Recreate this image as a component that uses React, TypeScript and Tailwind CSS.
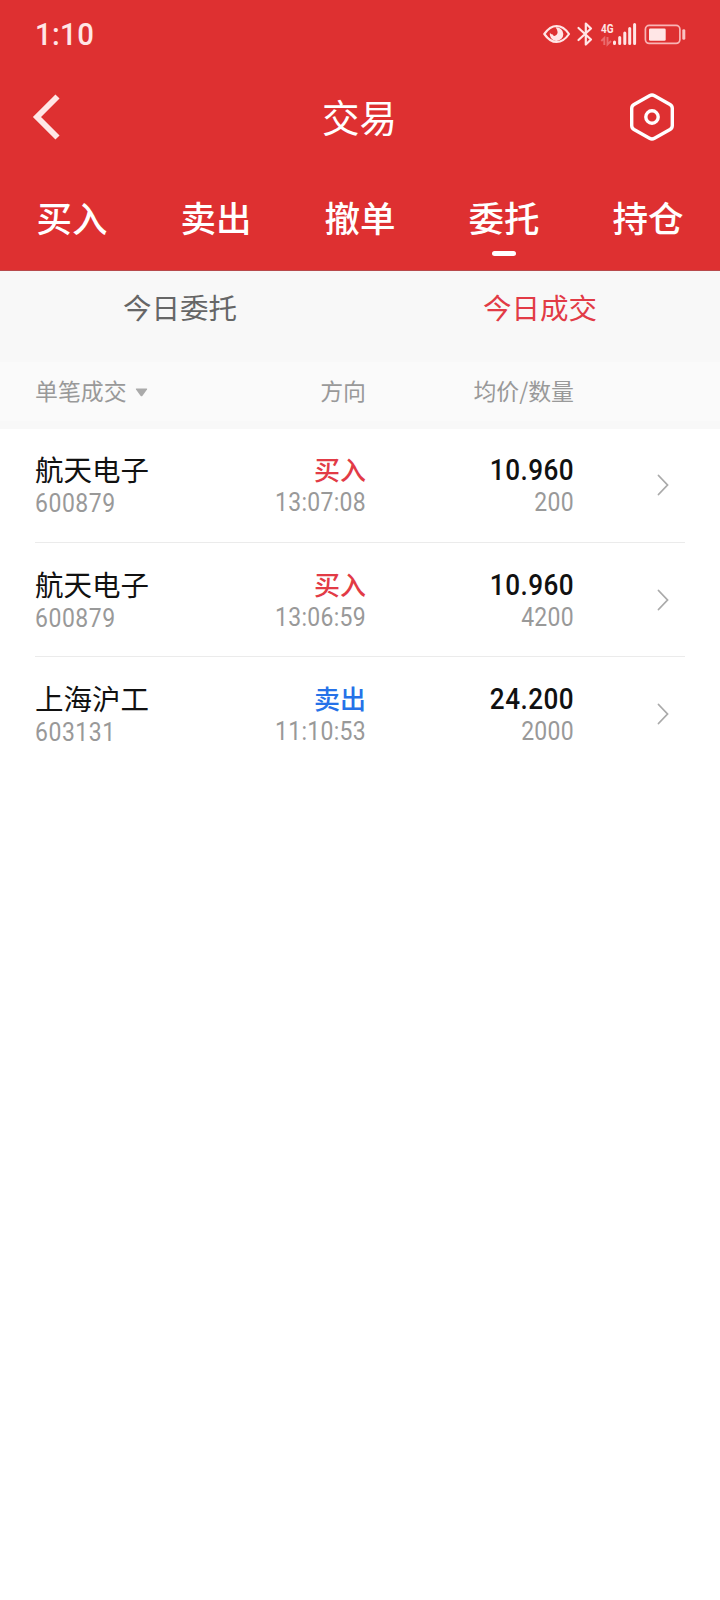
const cjk = "font-['Noto_Sans_CJK_SC',sans-serif]";

type Trade = {
  name: string;
  code: string;
  side: "买入" | "卖出";
  time: string;
  price: string;
  qty: string;
};

const trades: Trade[] = [
  { name: "航天电子", code: "600879", side: "买入", time: "13:07:08", price: "10.960", qty: "200" },
  { name: "航天电子", code: "600879", side: "买入", time: "13:06:59", price: "10.960", qty: "4200" },
  { name: "上海沪工", code: "603131", side: "卖出", time: "11:10:53", price: "24.200", qty: "2000" },
];

const tabs = ["买入", "卖出", "撤单", "委托", "持仓"];

function StatusIcons() {
  return (
    <svg width="144" height="26" viewBox="542 21 144 26" fill="none" className="text-[#ffe6e6]">
      <path d="M544.3 34C549 27.300 552.500 26 556.500 26S564.500 27.300 569 34C564.500 40.700 560.500 42 556.500 42S549 40.700 544.300 34Z" stroke="currentColor" strokeWidth="2.200" strokeLinejoin="round" />
      <path d="M555.500 27.400a6.800 6.800 0 1 1-5.600 5.200q0.600 2 2.900 1.900q0.300 1.800 2.200 1.300a3.700 3.700 0 0 0 2.300-5q-0.300-2.200-1.800-3.400Z" fill="currentColor" />
      <path d="M578.500 28L591 39.500L585.800 44.500V23.500L591 28.500L578.500 40" stroke="currentColor" strokeWidth="2.200" strokeLinejoin="round" strokeLinecap="round" />
      <text x="601" y="32.700" fontSize="13" fontWeight="700" fill="currentColor" textLength="12.500" lengthAdjust="spacingAndGlyphs" fontFamily="Roboto">4G</text>
      <g stroke="#ea6c6f" strokeWidth="1.900">
        <path d="M601.300 41L604.300 38V45M607.500 37V44.500L611 41" />
      </g>
      <g stroke="currentColor" strokeWidth="3" strokeLinecap="round">
        <path d="M614.500 42V43.500M619.700 37.500V43.500M624.800 33V43.500M629.700 28.500V43.500M634.600 24.500V43.500" />
      </g>
      <rect x="645.400" y="25.400" width="34.500" height="18" rx="3.800" stroke="#f9b5b6" strokeWidth="1.700" />
      <rect x="649" y="28.500" width="16.700" height="12.300" rx="1.300" fill="currentColor" />
      <rect x="682.300" y="29.200" width="3" height="10.600" rx="1.400" fill="#fac3c3" />
    </svg>
  );
}

function Row({ trade, index }: { trade: Trade; index: number }) {
  return (
    <li
      className={`mx-[35px] flex h-[114px] border-b ${index === trades.length - 1 ? "border-transparent" : "border-[#ebebeb]"} ${index === 0 ? "pt-[21px]" : "pt-[22px]"}`}
    >
      <div className="w-[180px]">
        <div className={`${cjk} text-[28.500px] leading-[38px] text-[#111]`}>{trade.name}</div>
        <div className="origin-left scale-x-90 text-[25.500px] leading-[30px] tracking-[0.600px] text-[#999]">{trade.code}</div>
      </div>
      <div className="w-[151px] text-right">
        <div className={`${cjk} text-[26px] leading-[38px] font-medium ${trade.side === "买入" ? "text-[#e23b46]" : "text-[#2672e8]"}`}>
          {trade.side}
        </div>
        <div className="origin-right scale-x-90 text-[25.500px] leading-[29px] tracking-[0.350px] text-[#999]">{trade.time}</div>
      </div>
      <div className="w-[208px] text-right">
        <div className="origin-right scale-x-90 text-[29px] leading-[40px] font-medium tracking-[0.500px] text-[#111]">{trade.price}</div>
        <div className="origin-right scale-x-90 text-[25.500px] leading-[25px] tracking-[0.350px] text-[#999]">{trade.qty}</div>
      </div>
      <svg width="12" height="22" viewBox="0 0 12 22" fill="none" className="mt-[24px] ml-[83px]">
        <path d="M1.500 1.500L10.500 11L1.500 20.500" stroke="#aaa" strokeWidth="1.800" strokeLinecap="round" />
      </svg>
    </li>
  );
}

export default function App() {
  return (
    <main className="min-h-[1600px] w-[720px] bg-white font-['Roboto','Noto_Sans_CJK_SC',sans-serif]">
      <header className="h-[271px] border-b border-[#b84a4c] bg-[#de3031] text-white">
        <div className="flex h-[68px] items-center justify-between pr-[34px] pl-[35px]">
          <span className="mt-[2px] origin-left scale-x-93 text-[31.500px] font-medium tracking-[0.400px] text-[#ffe6e6]">1:10</span>
          <StatusIcons />
        </div>
        <div className="flex h-[98px] items-center justify-between pr-[45px] pl-[32px]">
          <svg width="85" height="46" viewBox="0 0 85 46" fill="none">
            <path d="M25.500 2.500L5 23L25.500 43.500" stroke="#ffe6e6" strokeWidth="5.800" />
          </svg>
          <h1 className={`${cjk} -mt-[2px] text-[37.500px] leading-[52px]`}>交易</h1>
          <div className="flex w-[73px] justify-end">
            <svg width="46" height="48" viewBox="0 0 46 48" fill="none" stroke="white" strokeWidth="3.400">
              <path d="M20.500 2.700Q23 1.300 25.500 2.700L41 11.500Q43.300 12.900 43.300 15.500V32.500Q43.300 35.100 41 36.500L25.500 45.300Q23 46.700 20.500 45.300L5 36.500Q2.700 35.100 2.700 32.500V15.500Q2.700 12.900 5 11.500Z" />
              <circle cx="23" cy="24" r="6.200" />
            </svg>
          </div>
        </div>
        <nav className="grid h-[104px] grid-cols-5 pt-[25px]">
          {tabs.map((t) => (
            <div key={t} className="flex flex-col items-center">
              <span className={`${cjk} text-[35.500px] leading-[52px] font-medium`}>{t}</span>
              {t === "委托" && <span className="mt-[8px] h-[5px] w-[24px] rounded-full bg-white" />}
            </div>
          ))}
        </nav>
      </header>

      <div className={`grid h-[91px] grid-cols-2 bg-[#f8f8f8] pt-[15px] text-center text-[28.500px] leading-[42px] ${cjk}`}>
        <span className="text-[#666]">今日委托</span>
        <span className="text-[#e23b46]">今日成交</span>
      </div>

      <div className={`flex h-[67px] border-b-8 border-[#f8f8f8] bg-[#fafafa] px-[35px] pt-[11px] text-[22.900px] leading-[34px] text-[#999] ${cjk}`}>
        <div className="flex w-[180px] gap-[8px]">
          <span>单笔成交</span>
          <svg width="13" height="9" viewBox="0 0 13 9" className="mt-[15px]">
            <path d="M1.500 0.500H11.500Q12.600 0.500 12 1.500L7.500 7.800Q6.500 8.800 5.500 7.800L1 1.500Q0.400 0.500 1.500 0.500Z" fill="#aaa" />
          </svg>
        </div>
        <div className="w-[151px] text-right">方向</div>
        <div className="w-[208px] text-right">均价/数量</div>
      </div>

      <ul>
        {trades.map((t, i) => (
          <Row key={i} trade={t} index={i} />
        ))}
      </ul>
    </main>
  );
}
